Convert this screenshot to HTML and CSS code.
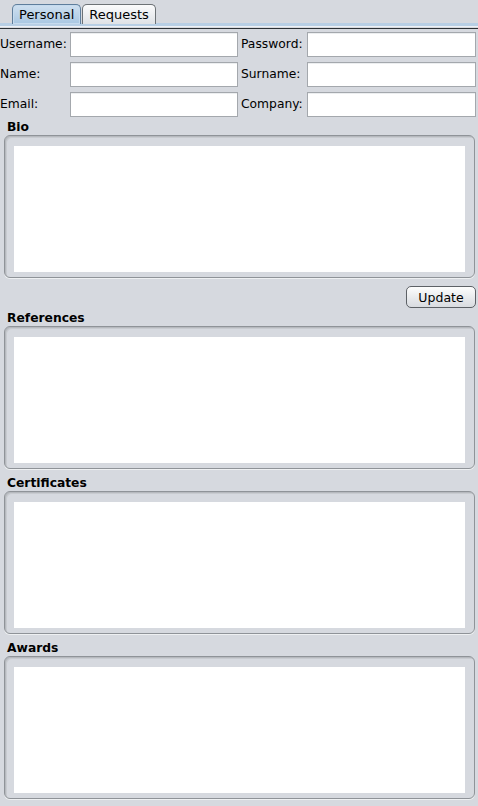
FILE: index.html
```html
<!DOCTYPE html>
<html>
<head>
<meta charset="utf-8">
<link rel="stylesheet" href="styles.css">
</head>
<body>
<div class="tabs">
  <div class="tab tab-active">Personal</div>
  <div class="tab">Requests</div>
</div>
<div class="tabline"></div>
<div class="form">
  <label class="lbl">Username:</label><div class="field"></div>
  <label class="lbl lbl2">Password:</label><div class="field"></div>
  <label class="lbl">Name:</label><div class="field"></div>
  <label class="lbl lbl2">Surname:</label><div class="field"></div>
  <label class="lbl">Email:</label><div class="field"></div>
  <label class="lbl lbl2">Company:</label><div class="field"></div>
</div>
<div class="section first">
  <div class="title">Bio</div>
  <div class="panel"><div class="area"></div></div>
</div>
<div class="actions"><button class="btn">Update</button></div>
<div class="section after-actions">
  <div class="title">References</div>
  <div class="panel"><div class="area"></div></div>
</div>
<div class="section">
  <div class="title">Certificates</div>
  <div class="panel"><div class="area"></div></div>
</div>
<div class="section">
  <div class="title">Awards</div>
  <div class="panel"><div class="area"></div></div>
</div>
</body>
</html>
```
FILE: styles.css
```css
html, body {
  margin: 0;
  padding: 0;
  background: #d6d9df;
  font-family: "DejaVu Sans", sans-serif;
  font-size: 12px;
  color: #000;
  width: 478px;
  height: 806px;
  overflow: hidden;
}
.tabs {
  display: flex;
  padding: 4px 0 0 12px;
  height: 19px;
  gap: 1px;
}
.tab {
  height: 19px;
  padding: 0 6px;
  line-height: 20px;
  border: 1px solid #6d7276;
  border-bottom: none;
  border-radius: 5px 5px 0 0;
  background: linear-gradient(#fbfbfc, #dfe2e6);
  font-size: 13px;
}
.tab-active {
  padding: 0 6px;
  background: linear-gradient(#cfe0f0, #a9c7e2);
  border-color: #5f7e9c;
  box-shadow: inset 0 0 0 1px #c6dbee;
}
.tabline {
  height: 3px;
  background: #b8cfe5;
  border-bottom: 1px solid #eef1f5;
  box-shadow: 0 1px 0 0 #d6d9df, 0 2px 0 0 #2d3237;
  margin-bottom: 5px;
}
.form {
  display: grid;
  grid-template-columns: 70px 168px 69px 169px;
  grid-auto-rows: 25px;
  row-gap: 5px;
}
.lbl {
  line-height: 25px;
  font-size: 12.3px;
  white-space: nowrap;
}
.lbl2 {
  padding-left: 3px;
}
.field {
  background: #fff;
  border: 1px solid #a4a8ad;
  box-shadow: inset 0 1px 0 #eceef0;
}
.section {
  margin-top: 7px;
}
.section.first {
  margin-top: 3px;
}
.section.after-actions {
  margin-top: 0;
}
.title {
  font-weight: bold;
  font-size: 12.3px;
  line-height: 14px;
  height: 14px;
  padding-left: 7px;
}
.panel {
  margin: 1px 3px 0 4px;
  height: 143px;
  box-sizing: border-box;
  border: 1px solid #8f9398;
  border-radius: 6px;
  padding: 10px 9px 5px 9px;
  background: #d6d9df;
  box-shadow: inset 1px 1px 0 #b6b9be, inset 2px 2px 0 #c8cbd0, 0 1px 0 #eef0f2;
}
.area {
  background: #fff;
  height: 100%;
}
.actions {
  display: flex;
  justify-content: flex-end;
  padding: 8px 2px 3px 0;
}
.btn {
  display: block;
  width: 70px;
  height: 22px;
  font-family: "DejaVu Sans", sans-serif;
  font-size: 12.5px;
  color: #000;
  border: 1px solid #5d6166;
  border-radius: 5px;
  background: linear-gradient(#fdfdfd, #e6e8eb 60%, #d9dce0);
  padding: 0;
}
```
